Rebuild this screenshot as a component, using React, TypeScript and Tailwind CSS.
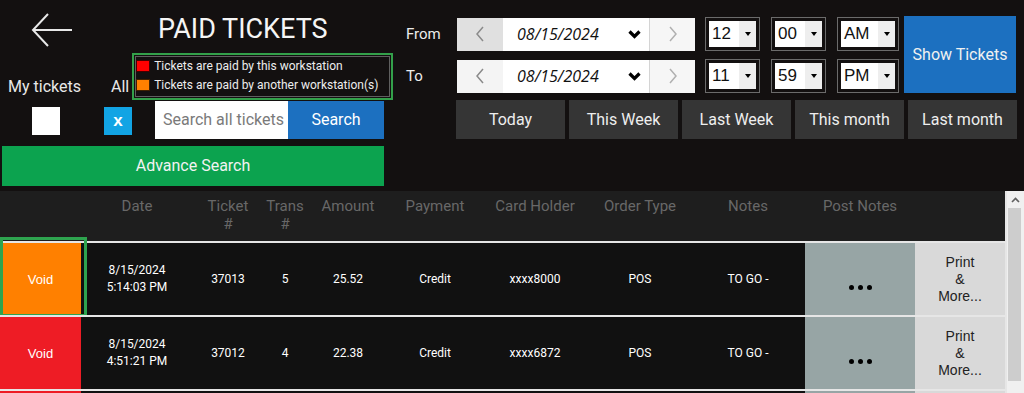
import React from "react";

const COLS =
  "grid grid-cols-[81px_112px_70px_44px_82px_92px_108px_102px_114px_110px_90px]";

function BackArrow() {
  return (
    <svg width="42" height="34" viewBox="0 0 42 34" className="ml-[31px] mt-[13px] shrink-0">
      <polyline points="17,1 2,17 17,33" fill="none" stroke="#e8e8e8" strokeWidth="2" />
      <line x1="2" y1="17" x2="41" y2="17" stroke="#e8e8e8" strokeWidth="2" />
    </svg>
  );
}

function ChevLeft({ color }: { color: string }) {
  return (
    <svg width="10" height="16" viewBox="0 0 10 16">
      <polyline points="8,1 2,8 8,15" fill="none" stroke={color} strokeWidth="1.5" />
    </svg>
  );
}
function ChevRight({ color }: { color: string }) {
  return (
    <svg width="10" height="16" viewBox="0 0 10 16">
      <polyline points="2,1 8,8 2,15" fill="none" stroke={color} strokeWidth="1.5" />
    </svg>
  );
}
function ChevDown() {
  return (
    <svg width="13" height="9" viewBox="0 0 13 9">
      <polyline points="1.5,1.5 6.5,6.5 11.5,1.5" fill="none" stroke="#000" strokeWidth="3.2" />
    </svg>
  );
}
function Caret() {
  return (
    <svg width="6" height="4" viewBox="0 0 6 4">
      <polygon points="0,0 6,0 3,4" fill="#000" />
    </svg>
  );
}

function DatePicker({ leftBg }: { leftBg: string }) {
  return (
    <div className="flex h-[33px] w-[238px]">
      <div className={`flex w-[46px] items-center justify-center ${leftBg}`}>
        <ChevLeft color="#8a8a8a" />
      </div>
      <div className="flex w-[146px] items-center bg-white pl-[14px] pr-[8px]">
        <span className="font-['Open_Sans',sans-serif] text-[16px] italic text-[#111]">
          08/15/2024
        </span>
        <span className="ml-auto flex items-center">
          <ChevDown />
        </span>
      </div>
      <div className="flex w-[46px] items-center justify-center border-l border-[#d4d4d4] bg-[#f6f6f6]">
        <ChevRight color="#b0b0b0" />
      </div>
    </div>
  );
}

function TimeSelect({ value, w }: { value: string; w: string }) {
  return (
    <div className={`flex h-[34px] ${w} border border-[#6b6b6b] p-[3px]`}>
      <div className="flex flex-1 bg-white">
        <span className="flex-1 pl-[3px] font-['Liberation_Sans',Arial,sans-serif] text-[17px] leading-[26px] text-[#111]">
          {value}
        </span>
        <span className="flex w-[17px] items-center justify-center bg-[#eeeeee]">
          <Caret />
        </span>
      </div>
    </div>
  );
}

function TimeRow({ label, h, m, ap, leftBg }: { label: string; h: string; m: string; ap: string; leftBg: string }) {
  return (
    <div className="flex h-[34px] items-center">
      <span className="w-[51px] text-[15px] text-[#ececec]">{label}</span>
      <DatePicker leftBg={leftBg} />
      <div className="ml-[10px]">
        <TimeSelect value={h} w="w-[55px]" />
      </div>
      <div className="ml-[11px]">
        <TimeSelect value={m} w="w-[55px]" />
      </div>
      <div className="ml-[11px]">
        <TimeSelect value={ap} w="w-[62px]" />
      </div>
    </div>
  );
}

type Row = {
  color: string;
  date: string;
  time: string;
  ticket: string;
  trans: string;
  amount: string;
  card: string;
  focused?: boolean;
};

const rows: Row[] = [
  { color: "bg-[#ff8000]", date: "8/15/2024", time: "5:14:03 PM", ticket: "37013", trans: "5", amount: "25.52", card: "xxxx8000", focused: true },
  { color: "bg-[#ee1c25]", date: "8/15/2024", time: "4:51:21 PM", ticket: "37012", trans: "4", amount: "22.38", card: "xxxx6872" },
];

function TableRow({ r }: { r: Row }) {
  return (
    <div className="relative border-t-2 border-[#e6e6e6] bg-[#111111]">
      <div className={`${COLS} h-[72px] items-center text-center text-[12px] leading-[17px] text-white`}>
        <div className={`flex h-full items-center justify-center ${r.color} font-['Liberation_Sans',Arial,sans-serif] text-[13px]`}>
          Void
        </div>
        <div>
          <div>{r.date}</div>
          <div>{r.time}</div>
        </div>
        <div>{r.ticket}</div>
        <div>{r.trans}</div>
        <div>{r.amount}</div>
        <div>Credit</div>
        <div>{r.card}</div>
        <div>POS</div>
        <div>TO GO -</div>
        <div className="flex h-full items-center justify-center bg-[#97a5a5] pt-[17px]">
          <div className="flex gap-[4px]">
            <span className="h-[5px] w-[5px] rounded-full bg-black" />
            <span className="h-[5px] w-[5px] rounded-full bg-black" />
            <span className="h-[5px] w-[5px] rounded-full bg-black" />
          </div>
        </div>
        <div className="flex h-full flex-col items-center justify-center bg-[#d9d9d9] font-['Liberation_Sans',Arial,sans-serif] text-[14px] leading-[17px] text-[#222]">
          <span>Print</span>
          <span>&amp;</span>
          <span>More...</span>
        </div>
      </div>
      {r.focused && (
        <div className="absolute left-0 top-[-6px] h-[80px] w-[87px] border-[3px] border-[#2ea44f]" />
      )}
    </div>
  );
}

export default function App() {
  return (
    <div className="h-[393px] w-[1024px] overflow-hidden bg-[#131010] font-['Roboto',sans-serif]">
      <div className="flex h-[191px]">
        {/* Left panel */}
        <div className="w-[391px] shrink-0">
          <div className="flex h-[53px] items-start">
            <BackArrow />
            <h1 className="ml-[85px] mt-[12px] whitespace-nowrap text-[27px] leading-[34px] text-[#f5f5f5]">PAID TICKETS</h1>
          </div>
          <div className="flex h-[47px]">
            <span className="ml-[8px] shrink-0 self-end whitespace-nowrap pb-[3px] text-[16px] leading-[20px] text-[#e8e8e8]">My tickets</span>
            <span className="ml-[30px] shrink-0 self-end whitespace-nowrap pb-[3px] text-[16px] leading-[20px] text-[#e8e8e8]">All</span>
            <div className="ml-[3px] w-[261px] shrink-0 border-2 border-[#33a04a] p-[1px]">
              <div className="flex h-full flex-col gap-[3px] border border-[#5f5f5f] pt-[1px] text-[12px] leading-[16px] text-[#ededed]">
                <div className="flex items-center">
                  <span className="h-[12px] w-[14px] border border-[#400] bg-[#ff0000]" />
                  <span className="ml-[4px] whitespace-nowrap">Tickets are paid by this workstation</span>
                </div>
                <div className="flex items-center">
                  <span className="h-[12px] w-[14px] border border-[#402000] bg-[#ff8000]" />
                  <span className="ml-[4px] whitespace-nowrap">Tickets are paid by another workstation(s)</span>
                </div>
              </div>
            </div>
          </div>
          <div className="mt-[1px] flex h-[38px]">
            <div className="ml-[32px] mt-[6px] h-[28px] w-[28px] bg-white" />
            <div className="ml-[44px] mt-[6px] flex h-[28px] w-[28px] items-center justify-center bg-[#12a4e4] font-['Liberation_Sans',Arial,sans-serif] text-[17px] font-bold text-white">
              x
            </div>
            <div className="ml-[23px] flex w-[133px] items-center overflow-hidden bg-white">
              <span className="whitespace-nowrap pl-[8px] text-[16px] text-[#7a7a7a]">Search all tickets</span>
            </div>
            <button className="w-[96px] bg-[#1c70c0] text-[16px] text-white">Search</button>
          </div>
          <button className="ml-[2px] mt-[7px] h-[40px] w-[382px] bg-[#0ca34f] text-[16px] text-[#f2f2f2]">
            Advance Search
          </button>
        </div>

        {/* Right panel */}
        <div className="flex-1">
          <div className="flex pl-[15px] pt-[16px]">
            <div className="flex flex-col gap-[8px] pt-[1px]">
              <TimeRow label="From" h="12" m="00" ap="AM" leftBg="bg-[#e0e0e0]" />
              <TimeRow label="To" h="11" m="59" ap="PM" leftBg="bg-[#f4f4f4]" />
            </div>
            <button className="ml-[5px] h-[77px] w-[112px] bg-[#1c70c0] text-[16px] text-[#f0f0f0]">
              Show Tickets
            </button>
          </div>
          <div className="ml-[65px] mt-[7px] flex gap-[4px]">
            {["Today", "This Week", "Last Week", "This month", "Last month"].map((t) => (
              <button key={t} className="h-[39px] w-[109px] bg-[#353535] text-[16px] text-[#eeeeee]">
                {t}
              </button>
            ))}
          </div>
        </div>
      </div>

      {/* Table */}
      <div className="flex h-[202px]">
        <div className="w-[1005px]">
          <div className={`${COLS} h-[50px] items-start bg-[#1e1e1e] pt-[6px] text-center text-[15px] leading-[18px] text-[#686868]`}>
            <div />
            <div>Date</div>
            <div>
              Ticket
              <br />#
            </div>
            <div>
              Trans
              <br />#
            </div>
            <div>Amount</div>
            <div>Payment</div>
            <div>Card Holder</div>
            <div>Order Type</div>
            <div>Notes</div>
            <div>Post Notes</div>
            <div />
          </div>
          {rows.map((r, i) => (
            <TableRow key={i} r={r} />
          ))}
          <div className="border-t-2 border-[#e6e6e6] bg-[#111111]">
            <div className={`${COLS} h-[10px]`}>
              <div className="bg-[#ee1c25]" />
              <div />
              <div />
              <div />
              <div />
              <div />
              <div />
              <div />
              <div />
              <div className="bg-[#97a5a5]" />
              <div className="bg-[#d9d9d9]" />
            </div>
          </div>
        </div>
        <div className="flex w-[19px] flex-col border-l-2 border-[#e6e6e6] bg-[#f0f0f0]">
          <div className="flex h-[17px] items-center justify-center">
            <svg width="9" height="6" viewBox="0 0 9 6">
              <polyline points="1,5 4.5,1.5 8,5" fill="none" stroke="#606060" strokeWidth="1.6" />
            </svg>
          </div>
          <div className="ml-[1px] mr-[3px] h-[173px] bg-[#cdcdcd]" />
        </div>
      </div>
    </div>
  );
}
